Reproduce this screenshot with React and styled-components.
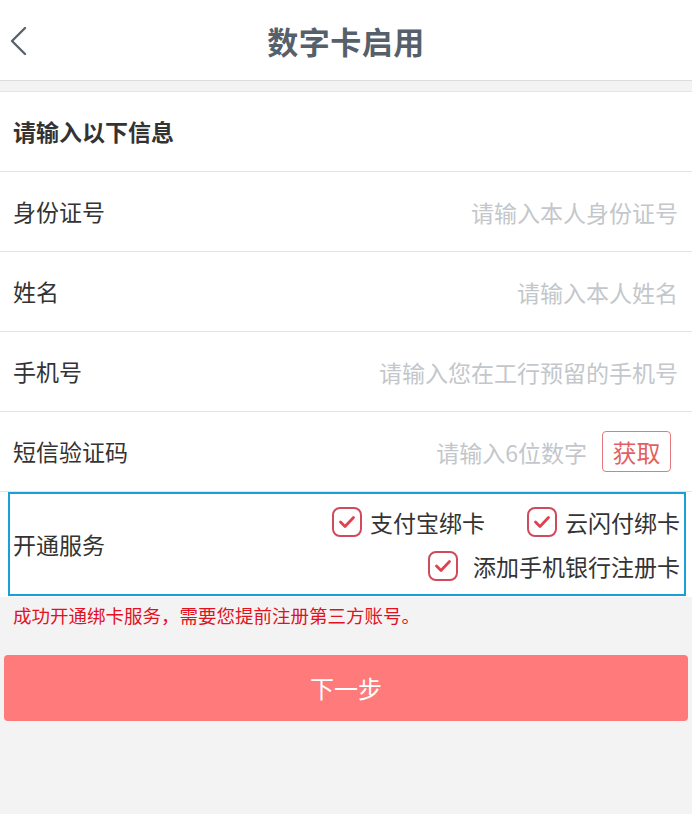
import React from 'react';
import styled, { createGlobalStyle } from 'styled-components';

const GlobalStyle = createGlobalStyle`
  html, body {
    margin: 0;
    padding: 0;
    background: #f3f3f3;
    font-family: "Noto Sans CJK SC", "Noto Sans", sans-serif;
  }
  * { box-sizing: border-box; }
`;

const fields = [
  { label: '身份证号', placeholder: '请输入本人身份证号' },
  { label: '姓名', placeholder: '请输入本人姓名' },
  { label: '手机号', placeholder: '请输入您在工行预留的手机号' },
];

const App = () => {
  return (
    <Page>
      <GlobalStyle />
      <Header>
        <BackButton>
          <svg width="20" height="30" viewBox="0 0 20 30">
            <path d="M17 2 L4 15 L17 28" fill="none" stroke="#59626c" strokeWidth="2.4" strokeLinejoin="round" strokeLinecap="round" />
          </svg>
        </BackButton>
        <Title>数字卡启用</Title>
      </Header>

      <Form>
        <Row>
          <SectionTitle>请输入以下信息</SectionTitle>
        </Row>
        {fields.map((f) => (
          <Row key={f.label}>
            <Label>{f.label}</Label>
            <Input placeholder={f.placeholder} />
          </Row>
        ))}
        <Row>
          <Label>短信验证码</Label>
          <Input placeholder="请输入6位数字" />
          <CodeButton>获取</CodeButton>
        </Row>
        <ServiceRow>
          <ServiceBox>
            <Label>开通服务</Label>
            <Options>
              <OptionLine>
                <Option>
                  <CheckBox />
                  <span>支付宝绑卡</span>
                </Option>
                <Option $gap={42}>
                  <CheckBox />
                  <span>云闪付绑卡</span>
                </Option>
              </OptionLine>
              <OptionLine>
                <Option $space={15}>
                  <CheckBox />
                  <span>添加手机银行注册卡</span>
                </Option>
              </OptionLine>
            </Options>
          </ServiceBox>
        </ServiceRow>
      </Form>

      <Notice>成功开通绑卡服务，需要您提前注册第三方账号。</Notice>
      <NextButton>下一步</NextButton>
    </Page>
  );
};

const CheckBox = () => (
  <Box>
    <svg width="18" height="14" viewBox="0 0 18 14">
      <path d="M2.5 7 L7 11.5 L15.5 2.5" fill="none" stroke="#e0404f" strokeWidth="2.8" strokeLinecap="round" strokeLinejoin="round" />
    </svg>
  </Box>
);

export default App;

const Page = styled.div`
  width: 692px;
  min-height: 814px;
  background: #f3f3f3;
`;

//top bar
const Header = styled.div`
  position: relative;
  height: 81px;
  background: #fff;
  border-bottom: 1px solid #dcdcdc;
  display: flex;
  align-items: center;
  justify-content: center;
`;

const BackButton = styled.div`
  position: absolute;
  left: 8px;
  top: 26px;
  display: flex;
`;

const Title = styled.div`
  font-size: 31px;
  line-height: 1;
  font-weight: 700;
  color: #56606b;
  letter-spacing: 0.5px;
`;

const Form = styled.div`
  margin-top: 10px;
  background: #fff;
  border-top: 1px solid #e4e4e4;
`;

const Row = styled.div`
  height: 80px;
  display: flex;
  align-items: center;
  padding: 0 14px 0 13px;
  border-bottom: 1px solid #e4e4e4;
`;

const SectionTitle = styled.div`
  font-size: 23px;
  line-height: 1;
  font-weight: 700;
  color: #333;
`;

const Label = styled.div`
  font-size: 23px;
  line-height: 1;
  color: #333;
  white-space: nowrap;
`;

const Input = styled.input`
  flex: 1;
  min-width: 0;
  border: none;
  outline: none;
  background: transparent;
  text-align: right;
  font-family: inherit;
  font-size: 23px;
  line-height: 1;
  color: #333;
  padding: 0;
  &::placeholder {
    color: #c3c7cb;
  }
`;

const CodeButton = styled.div`
  margin-left: 15px;
  margin-right: 7px;
  width: 69px;
  height: 41px;
  border: 1.5px solid #e57a7e;
  border-radius: 4px;
  display: flex;
  align-items: center;
  justify-content: center;
  font-size: 24px;
  line-height: 1;
  color: #e35f63;
`;

const ServiceRow = styled.div`
  background: #fff;
  padding: 0 6px 1px 8px;
`;

const ServiceBox = styled.div`
  height: 104px;
  border: 2px solid #1aa0d8;
  display: flex;
  align-items: center;
  justify-content: space-between;
  padding: 0 4px 0 3px;
`;

const Options = styled.div`
  display: flex;
  flex-direction: column;
  align-items: flex-end;
  gap: 14px;
`;

const OptionLine = styled.div`
  display: flex;
  align-items: center;
`;

const Option = styled.div`
  display: flex;
  align-items: center;
  gap: ${(p) => p.$space || 8}px;
  margin-left: ${(p) => p.$gap || 0}px;
  font-size: 23px;
  line-height: 1;
  color: #333;
`;

const Box = styled.div`
  width: 30px;
  height: 30px;
  border: 2px solid #cf4b5b;
  border-radius: 8px;
  display: flex;
  align-items: center;
  justify-content: center;
`;

const Notice = styled.div`
  padding: 4px 13px 0;
  font-size: 18.5px;
  color: #e3111f;
  line-height: 28px;
`;

const NextButton = styled.div`
  margin: 26px 4px 0;
  height: 66px;
  background: #ff7a7a;
  border-radius: 4px;
  display: flex;
  align-items: center;
  justify-content: center;
  font-size: 24px;
  line-height: 1;
  color: #fff;
`;
